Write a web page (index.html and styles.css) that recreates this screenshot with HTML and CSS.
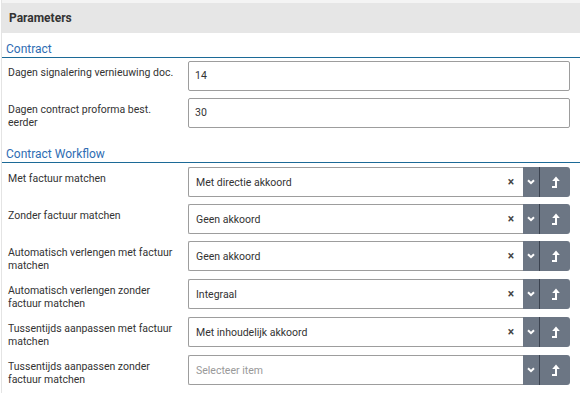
FILE: index.html
```html
<!DOCTYPE html>
<html>
<head>
<meta charset="utf-8">
<link rel="stylesheet" href="styles.css">
</head>
<body>
<div class="panel">
  <div class="topstrip"></div>
  <div class="header">Parameters</div>

  <div class="section-title">Contract</div>
  <div class="rows">
    <div class="row">
      <div class="label">Dagen signalering vernieuwing doc.</div>
      <div class="field"><div class="input">14</div></div>
    </div>
    <div class="row">
      <div class="label">Dagen contract proforma best. eerder</div>
      <div class="field"><div class="input">30</div></div>
    </div>
  </div>

  <div class="section-title workflow">Contract Workflow</div>
  <div class="rows wf-rows">
    <div class="row">
      <div class="label">Met factuur matchen</div>
      <div class="field select">
        <div class="sel-box"><span class="sel-value">Met directie akkoord</span><span class="clear">×</span></div>
        <div class="btn drop"><svg width="8" height="6" viewBox="0 0 8 6"><path d="M1 1.2 L4 4.2 L7 1.2" fill="none" stroke="#fff" stroke-width="2"/></svg></div>
        <div class="btn up"><svg width="9" height="12" viewBox="0 0 9 12"><path d="M5 12 V3.5" fill="none" stroke="#fff" stroke-width="2"/><path d="M1 11 H5" fill="none" stroke="#fff" stroke-width="2"/><path d="M1.2 5 L5 0.5 L8.8 5 Z" fill="#fff"/></svg></div>
      </div>
    </div>
    <div class="row">
      <div class="label">Zonder factuur matchen</div>
      <div class="field select">
        <div class="sel-box"><span class="sel-value">Geen akkoord</span><span class="clear">×</span></div>
        <div class="btn drop"><svg width="8" height="6" viewBox="0 0 8 6"><path d="M1 1.2 L4 4.2 L7 1.2" fill="none" stroke="#fff" stroke-width="2"/></svg></div>
        <div class="btn up"><svg width="9" height="12" viewBox="0 0 9 12"><path d="M5 12 V3.5" fill="none" stroke="#fff" stroke-width="2"/><path d="M1 11 H5" fill="none" stroke="#fff" stroke-width="2"/><path d="M1.2 5 L5 0.5 L8.8 5 Z" fill="#fff"/></svg></div>
      </div>
    </div>
    <div class="row">
      <div class="label">Automatisch verlengen met factuur matchen</div>
      <div class="field select">
        <div class="sel-box"><span class="sel-value">Geen akkoord</span><span class="clear">×</span></div>
        <div class="btn drop"><svg width="8" height="6" viewBox="0 0 8 6"><path d="M1 1.2 L4 4.2 L7 1.2" fill="none" stroke="#fff" stroke-width="2"/></svg></div>
        <div class="btn up"><svg width="9" height="12" viewBox="0 0 9 12"><path d="M5 12 V3.5" fill="none" stroke="#fff" stroke-width="2"/><path d="M1 11 H5" fill="none" stroke="#fff" stroke-width="2"/><path d="M1.2 5 L5 0.5 L8.8 5 Z" fill="#fff"/></svg></div>
      </div>
    </div>
    <div class="row">
      <div class="label">Automatisch verlengen zonder factuur matchen</div>
      <div class="field select">
        <div class="sel-box"><span class="sel-value">Integraal</span><span class="clear">×</span></div>
        <div class="btn drop"><svg width="8" height="6" viewBox="0 0 8 6"><path d="M1 1.2 L4 4.2 L7 1.2" fill="none" stroke="#fff" stroke-width="2"/></svg></div>
        <div class="btn up"><svg width="9" height="12" viewBox="0 0 9 12"><path d="M5 12 V3.5" fill="none" stroke="#fff" stroke-width="2"/><path d="M1 11 H5" fill="none" stroke="#fff" stroke-width="2"/><path d="M1.2 5 L5 0.5 L8.8 5 Z" fill="#fff"/></svg></div>
      </div>
    </div>
    <div class="row">
      <div class="label">Tussentijds aanpassen met factuur matchen</div>
      <div class="field select">
        <div class="sel-box"><span class="sel-value">Met inhoudelijk akkoord</span><span class="clear">×</span></div>
        <div class="btn drop"><svg width="8" height="6" viewBox="0 0 8 6"><path d="M1 1.2 L4 4.2 L7 1.2" fill="none" stroke="#fff" stroke-width="2"/></svg></div>
        <div class="btn up"><svg width="9" height="12" viewBox="0 0 9 12"><path d="M5 12 V3.5" fill="none" stroke="#fff" stroke-width="2"/><path d="M1 11 H5" fill="none" stroke="#fff" stroke-width="2"/><path d="M1.2 5 L5 0.5 L8.8 5 Z" fill="#fff"/></svg></div>
      </div>
    </div>
    <div class="row">
      <div class="label">Tussentijds aanpassen zonder factuur matchen</div>
      <div class="field select">
        <div class="sel-box"><span class="sel-value placeholder">Selecteer item</span></div>
        <div class="btn drop"><svg width="8" height="6" viewBox="0 0 8 6"><path d="M1 1.2 L4 4.2 L7 1.2" fill="none" stroke="#fff" stroke-width="2"/></svg></div>
        <div class="btn up"><svg width="9" height="12" viewBox="0 0 9 12"><path d="M5 12 V3.5" fill="none" stroke="#fff" stroke-width="2"/><path d="M1 11 H5" fill="none" stroke="#fff" stroke-width="2"/><path d="M1.2 5 L5 0.5 L8.8 5 Z" fill="#fff"/></svg></div>
      </div>
    </div>
  </div>
</div>
</body>
</html>
```

FILE: styles.css
```css
html, body {
  margin: 0;
  padding: 0;
  background: #fff;
}
body {
  font-family: Roboto, "Liberation Sans", Arial, sans-serif;
  font-size: 10.5px;
  color: #333;
}
.panel {
  margin-left: 1px;
  border-left: 1px solid #e4e4e4;
  min-height: 393px;
  box-sizing: border-box;
}
.topstrip {
  height: 3px;
  background: #f4f4f4;
}
.header {
  height: 30px;
  line-height: 30px;
  background: #e6e6e6;
  padding-left: 7px;
  font-weight: bold;
  font-size: 12px;
  color: #333;
}
.section-title {
  margin-top: 9px;
  padding-left: 4px;
  font-size: 12px;
  line-height: 15px;
  color: #2f6db3;
  border-bottom: 1px solid #1c6a97;
}
.section-title.workflow {
  margin-top: 18px;
}
.rows {
  display: flex;
  flex-direction: column;
  gap: 7px;
  padding-top: 3px;
}
.rows.wf-rows {
  padding-top: 4px;
}
.row {
  display: flex;
  align-items: flex-start;
}
.label {
  width: 180px;
  padding-left: 6px;
  padding-top: 6px;
  padding-right: 2px;
  line-height: 12.5px;
  box-sizing: border-box;
  flex: none;
}
.field {
  flex: none;
  width: 382px;
  height: 30px;
  margin-left: 6px;
}
.input {
  height: 30px;
  box-sizing: border-box;
  border: 1px solid #9d9d9d;
  border-radius: 2px;
  padding-left: 6px;
  line-height: 28px;
  background: #fff;
}
.select {
  display: flex;
}
.sel-box {
  flex: 1;
  display: flex;
  align-items: center;
  border: 1px solid #9d9d9d;
  border-right: none;
  border-radius: 2px 0 0 2px;
  padding-left: 7px;
  padding-right: 9px;
  box-sizing: border-box;
  height: 30px;
}
.sel-value {
  flex: 1;
}
.placeholder {
  color: #999;
}
.clear {
  font-size: 12px;
  font-weight: bold;
  color: #444;
}
.btn {
  background: #6c7684;
  height: 30px;
  display: flex;
  align-items: center;
  justify-content: center;
}
.btn.drop {
  width: 16px;
  border-right: 1px solid #3b4350;
}
.btn.up {
  width: 30px;
  border-radius: 0 3px 3px 0;
}
```
